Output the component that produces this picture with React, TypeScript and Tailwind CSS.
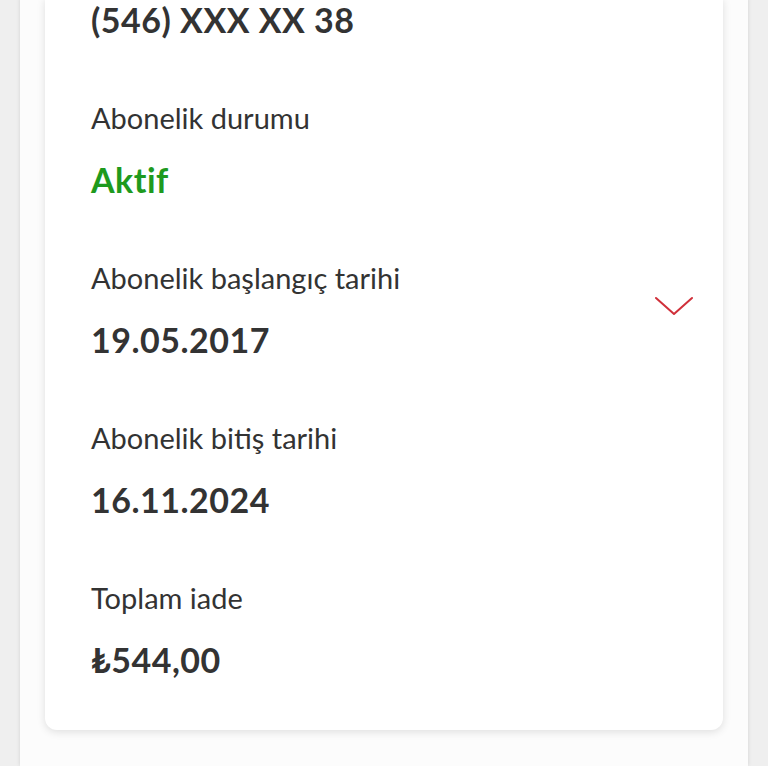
import React from "react";

interface Row {
  label: string;
  value: string;
  tone?: "green";
  expandable?: boolean;
}

const rows: Row[] = [
  { label: "Abonelik durumu", value: "Aktif", tone: "green" },
  { label: "Abonelik başlangıç tarihi", value: "19.05.2017", expandable: true },
  { label: "Abonelik bitiş tarihi", value: "16.11.2024" },
  { label: "Toplam iade", value: "₺544,00" },
];

function Chevron() {
  return (
    <svg width="38" height="20" viewBox="0 0 38 20" fill="none" className="mb-[9px] shrink-0">
      <path d="M1 2 L19 18 L37 2" stroke="#d0303a" strokeWidth="2" strokeLinecap="round" strokeLinejoin="round" />
    </svg>
  );
}

export default function App() {
  return (
    <div className="min-h-screen bg-[#efefef] px-[20px] font-['Lato',sans-serif] text-[#333333]">
      <div className="min-h-screen bg-[#fcfcfc] px-[25px] shadow-[0_0_4px_rgba(0,0,0,0.12)]">
        <div className="-mt-[2px] rounded-b-[12px] bg-white pb-[48px] pl-[46px] pr-[30px] shadow-[0_2px_8px_rgba(0,0,0,0.12)]">
          {/* Phone number (label is scrolled out of view) */}
          <div className="text-[34px] font-bold leading-[44px] tracking-[0.5px]">(546) XXX XX 38</div>

          <div className="mt-[56px] flex flex-col gap-[56px]">
            {rows.map((row) => (
              <div key={row.label} className="flex items-center justify-between">
                <div>
                  <div className="text-[29px] leading-[40px]">{row.label}</div>
                  <div
                    className={`mt-[20px] text-[34px] font-bold leading-[44px] tracking-[0.5px] ${
                      row.tone === "green" ? "text-[#1e9a1e]" : ""
                    }`}
                  >
                    {row.value}
                  </div>
                </div>
                {row.expandable && <Chevron />}
              </div>
            ))}
          </div>
        </div>
      </div>
    </div>
  );
}
